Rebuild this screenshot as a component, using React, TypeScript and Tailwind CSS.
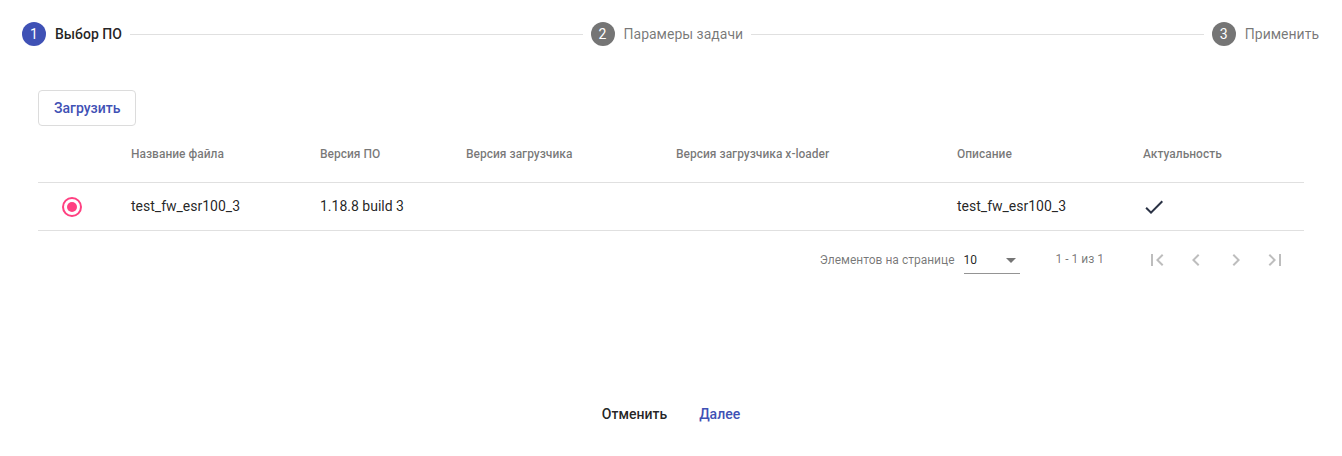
import React from "react";

const Icon = ({ d, className }: { d: string; className?: string }) => (
  <svg viewBox="0 0 24 24" className={className} fill="currentColor">
    <path d={d} />
  </svg>
);

const Step = ({ n, label, active }: { n: number; label: string; active?: boolean }) => (
  <div className="flex items-center shrink-0">
    <div
      className={`w-6 h-6 rounded-full flex items-center justify-center text-white text-[14px] ${
        active ? "bg-[#3f51b5]" : "bg-[#757575]"
      }`}
    >
      {n}
    </div>
    <div
      className={`ml-[9px] text-[14px] ${
        active ? "text-[rgba(0,0,0,0.87)] font-medium" : "text-[rgba(0,0,0,0.54)]"
      }`}
    >
      {label}
    </div>
  </div>
);

const cols = ["w-[93px]", "w-[189px]", "w-[146px]", "w-[210px]", "w-[281px]", "w-[186px]", "flex-1"];

export default function App() {
  return (
    <div className="w-[1342px] h-[456px] bg-white font-['Roboto',sans-serif] flex flex-col">
      {/* Stepper */}
      <div className="flex items-center pl-[22px] pr-[23px] pt-[22px]">
        <Step n={1} label="Выбор ПО" active />
        <div className="flex-1 h-px bg-[#e0e0e0] mx-[8px]" />
        <Step n={2} label="Парамеры задачи" />
        <div className="flex-1 h-px bg-[#e0e0e0] mx-[8px]" />
        <Step n={3} label="Применить" />
      </div>

      <div className="px-[38px] mt-[44px]">
        <button className="h-[36px] px-[15px] border border-[#dcdcdc] rounded-[4px] text-[14px] font-medium text-[#3f51b5] bg-white">
          Загрузить
        </button>

        {/* Table */}
        <div>
          <div className="flex items-center h-[57px] border-b border-[#e0e0e0] text-[12px] font-medium text-[rgba(0,0,0,0.54)]">
            <div className={cols[0]} />
            <div className={cols[1]}>Название файла</div>
            <div className={cols[2]}>Версия ПО</div>
            <div className={cols[3]}>Версия загрузчика</div>
            <div className={cols[4]}>Версия загрузчика x-loader</div>
            <div className={cols[5]}>Описание</div>
            <div className={cols[6]}>Актуальность</div>
          </div>
          <div className="flex items-center h-[48px] border-b border-[#e0e0e0] text-[14px] text-[rgba(0,0,0,0.87)]">
            <div className={`${cols[0]} pl-[24px]`}>
              <div className="w-[20px] h-[20px] rounded-full border-2 border-[#ff4081] flex items-center justify-center">
                <div className="w-[10px] h-[10px] rounded-full bg-[#ff4081]" />
              </div>
            </div>
            <div className={cols[1]}>test_fw_esr100_3</div>
            <div className={cols[2]}>1.18.8 build 3</div>
            <div className={cols[3]} />
            <div className={cols[4]} />
            <div className={cols[5]}>test_fw_esr100_3</div>
            <div className={`${cols[6]} flex`}>
              <Icon d="M9 16.17L4.83 12l-1.42 1.41L9 19 21 7l-1.41-1.41z" className="w-[24px] h-[24px] text-[#2a3245] -ml-[1px]" />
            </div>
          </div>
        </div>

        {/* Paginator */}
        <div className="flex items-center justify-end h-[58px] pr-[9px] text-[12px] text-[rgba(0,0,0,0.54)]">
          <div>Элементов на странице</div>
          <div className="ml-[9px] w-[56px] h-[26px] border-b border-[rgba(0,0,0,0.42)] flex items-center justify-between mt-[1px]">
            <span className="text-[12px] text-[rgba(0,0,0,0.87)]">10</span>
            <div className="w-0 h-0 border-l-[5px] border-r-[5px] border-t-[5px] border-l-transparent border-r-transparent border-t-[rgba(0,0,0,0.54)] mr-[4px]" />
          </div>
          <div className="ml-[36px] mr-[33px] -mt-[2px]">1 - 1 из 1</div>
          <div className="flex text-[rgba(0,0,0,0.26)]">
            {[
              "M18.41 16.59L13.82 12l4.59-4.59L17 6l-6 6 6 6zM6 6h2v12H6z",
              "M15.41 7.41L14 6l-6 6 6 6 1.41-1.41L10.83 12z",
              "M10 6L8.59 7.41 13.17 12l-4.58 4.59L10 18l6-6z",
              "M5.59 7.41L10.18 12l-4.59 4.59L7 18l6-6-6-6zM16 6h2v12h-2z",
            ].map((d, i) => (
              <div key={i} className="w-[39.5px] h-[40px] flex items-center justify-center">
                <Icon d={d} className="w-[24px] h-[24px]" />
              </div>
            ))}
          </div>
        </div>
      </div>

      {/* Footer */}
      <div className="flex justify-center mt-[107px]">
        <button className="h-[36px] px-[16px] text-[14px] font-medium text-[rgba(0,0,0,0.87)]">Отменить</button>
        <button className="h-[36px] px-[16px] text-[14px] font-medium text-[#3f51b5]">Далее</button>
      </div>
    </div>
  );
}
